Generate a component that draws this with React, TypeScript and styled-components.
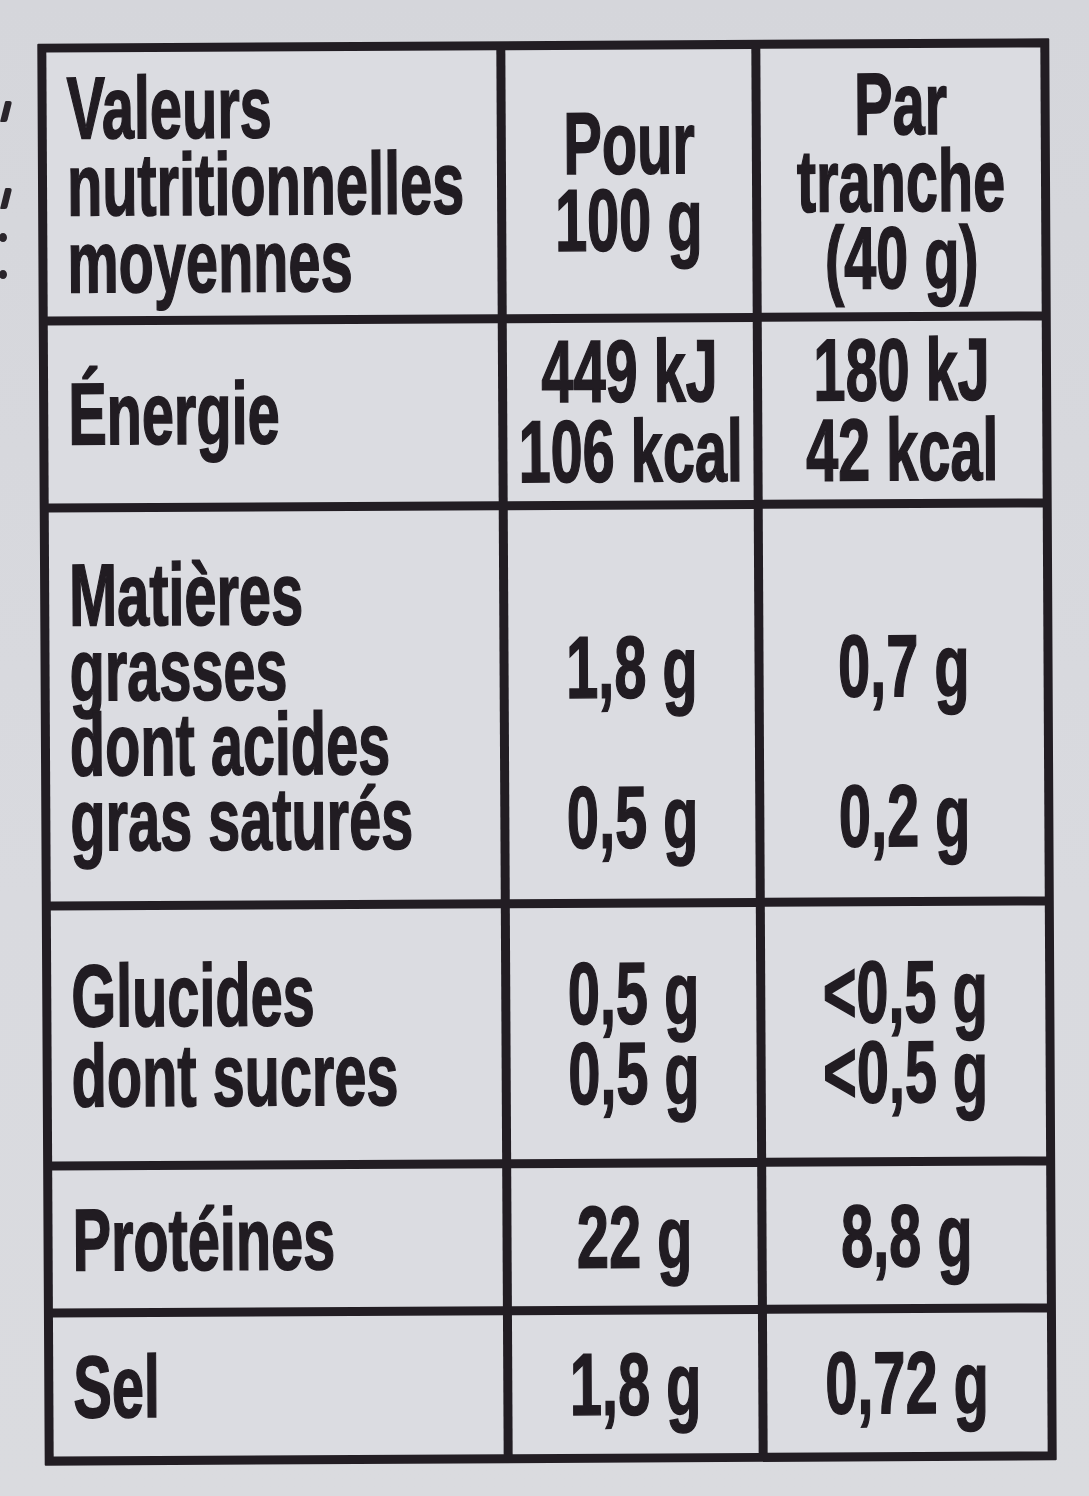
import React from 'react';
import styled, { createGlobalStyle } from 'styled-components';

const Global = createGlobalStyle`
  html, body { margin: 0; padding: 0; background: #d7d8dd; }
  body { width: 1089px; height: 1496px; overflow: hidden; }
`;

const Page = styled.div`
  width: 1089px;
  height: 1496px;
  box-sizing: border-box;
  display: flex;
  align-items: flex-start;
  padding-top: 41px;
  background: linear-gradient(180deg, #d5d6db 0%, #d9dadf 60%, #dadbdf 100%);
  font-family: "Liberation Sans", Arial, sans-serif;
  font-weight: 700;
  color: #211c22;
`;

const Margin = styled.div`
  width: 41px;
  flex: none;
  display: flex;
  flex-direction: column;
  align-items: flex-start;
  padding-top: 60px;
  box-sizing: border-box;
`;

const Tick = styled.span<{ $gap: number }>`
  display: block;
  width: 7px;
  height: 21px;
  margin-top: ${p => p.$gap}px;
  background: #2a252b;
  border-radius: 1px 3px 2px 1px;
  transform: skewX(-14deg);
  transform-origin: left bottom;
`;

const Dot = styled.span<{ $gap: number }>`
  display: block;
  width: 8px;
  height: 9px;
  margin-top: ${p => p.$gap}px;
  margin-left: -1px;
  border-radius: 50%;
  background: #2a252b;
`;

const Table = styled.div`
  display: grid;
  grid-template-columns: 450px 246px 280px;
  grid-template-rows: 264px 178px 389px 251px 138px 139px;
  gap: 9px;
  padding: 9px;
  background: #221d23;
  border-radius: 1px;
  transform: rotate(-0.3deg);
  transform-origin: 50% 50%;
`;

type Align = 'left' | 'center';

const Cell = styled.div<{ $align: Align }>`
  background: #dbdce1;
  display: flex;
  flex-direction: column;
  justify-content: center;
  padding: ${p => (p.$align === 'left' ? '0 0 0 20px' : '0 16px')};
  min-width: 0;
  overflow: visible;
`;

const Line = styled.div<{ $align: Align; $lh: number }>`
  display: flex;
  justify-content: ${p => (p.$align === 'left' ? 'flex-start' : 'center')};
  height: ${p => p.$lh}px;
  line-height: ${p => p.$lh}px;
  font-size: 88px;
  white-space: nowrap;
  letter-spacing: 0;
`;

const Squeeze = styled.span<{ $align: Align }>`
  display: inline-block;
  flex: none;
  -webkit-text-stroke: 1.6px #211c22;
  transform: scaleX(0.655);
  transform-origin: ${p => (p.$align === 'left' ? 'left' : 'center')} center;
`;

type Row = { label: string[]; a: string[]; b: string[]; lh?: number };

const rows: Row[] = [
  { label: ['Valeurs', 'nutritionnelles', 'moyennes'], a: ['Pour', '100 g'], b: ['Par', 'tranche', '(40 g)'] },
  { label: ['Énergie'], a: ['449 kJ', '106 kcal'], b: ['180 kJ', '42 kcal'], lh: 80 },
  {
    label: ['Matières', 'grasses', 'dont acides', 'gras saturés'],
    a: ['', '1,8 g', '', '0,5 g'],
    b: ['', '0,7 g', '', '0,2 g'],
    lh: 75,
  },
  { label: ['Glucides', 'dont sucres'], a: ['0,5 g', '0,5 g'], b: ['<0,5 g', '<0,5 g'], lh: 80 },
  { label: ['Protéines'], a: ['22 g'], b: ['8,8 g'] },
  { label: ['Sel'], a: ['1,8 g'], b: ['0,72 g'] },
];

function CellLines({ lines, align, lh }: { lines: string[]; align: Align; lh: number }) {
  return (
    <Cell $align={align}>
      {lines.map((t, i) => (
        <Line key={i} $align={align} $lh={lh}>
          <Squeeze $align={align}>{t || '\u00a0'}</Squeeze>
        </Line>
      ))}
    </Cell>
  );
}

export default function App() {
  return (
    <>
      <Global />
      <Page>
        <Margin>
          <Tick $gap={0} />
          <Tick $gap={66} />
          <Dot $gap={24} />
          <Dot $gap={28} />
        </Margin>
        <Table>
          {rows.map((r, i) => (
            <React.Fragment key={i}>
              <CellLines lines={r.label} align="left" lh={r.lh ?? 77} />
              <CellLines lines={r.a} align="center" lh={r.lh ?? 77} />
              <CellLines lines={r.b} align="center" lh={r.lh ?? 77} />
            </React.Fragment>
          ))}
        </Table>
      </Page>
    </>
  );
}
